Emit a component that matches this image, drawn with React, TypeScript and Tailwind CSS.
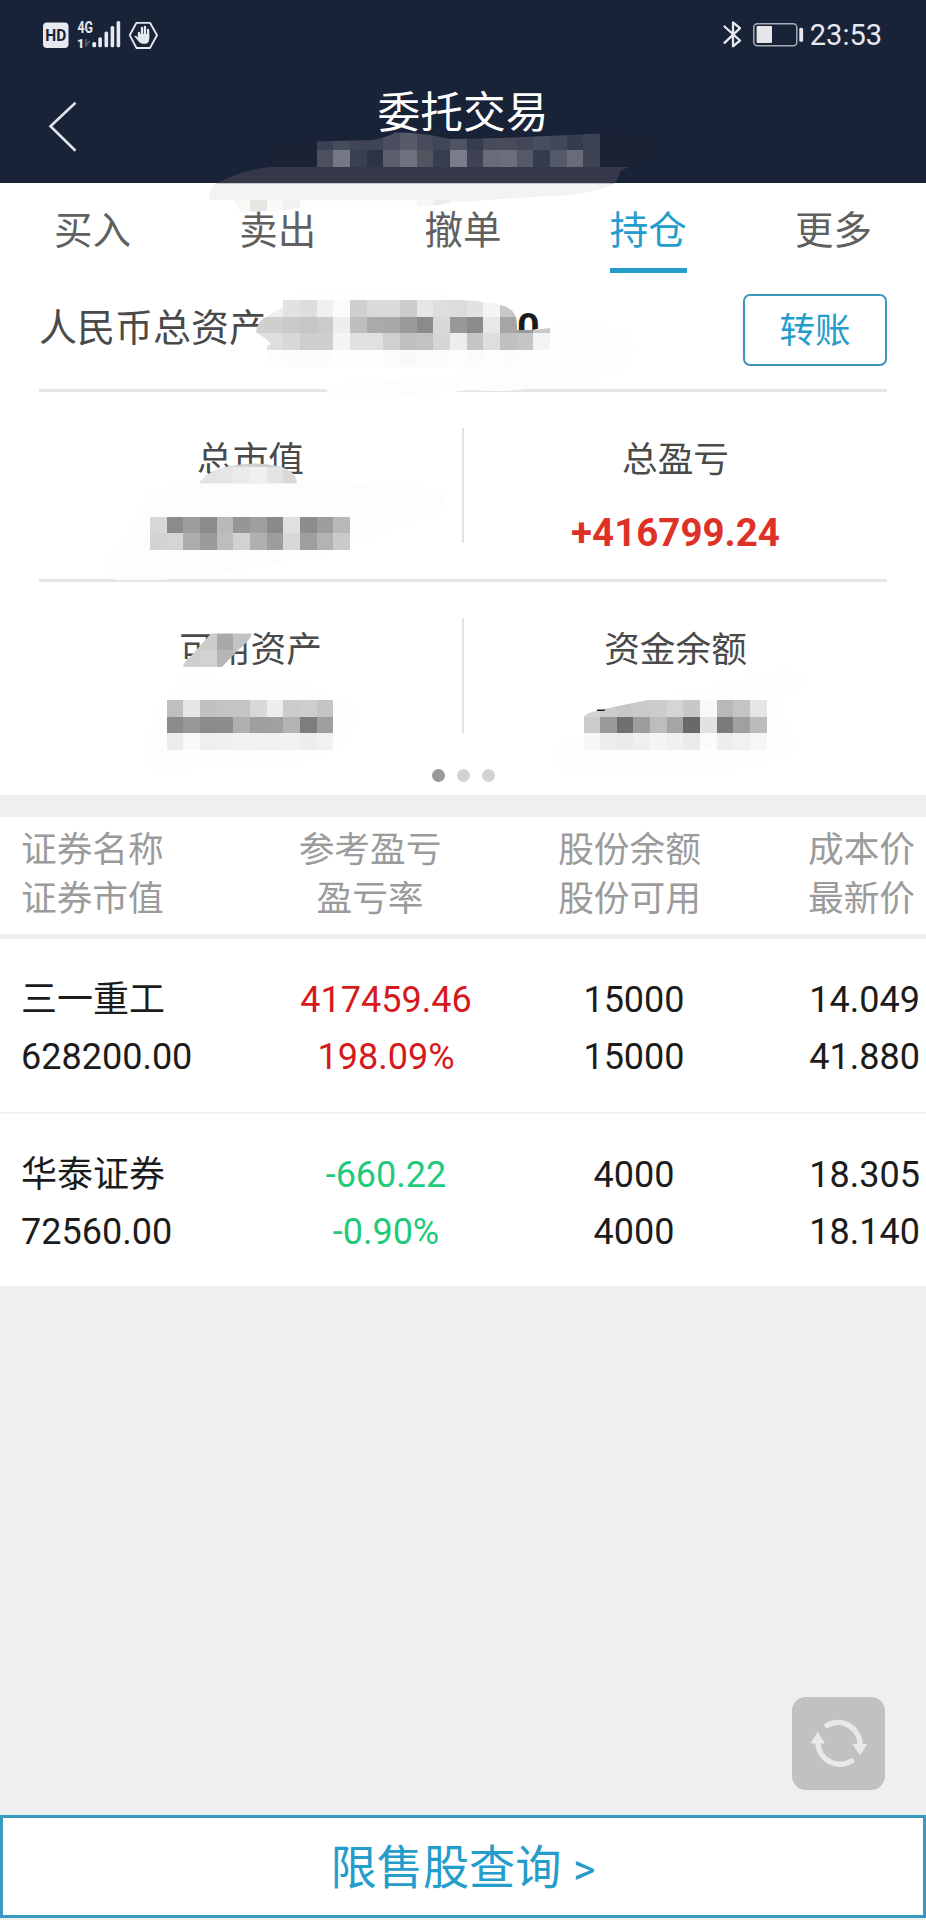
import type { ReactNode } from "react";

const CELL = 50 / 3;

const tabs = ["买入", "卖出", "撤单", "持仓", "更多"];

const columns = [
  { top: "证券名称", bottom: "证券市值", width: "w-[268px] items-start" },
  { top: "参考盈亏", bottom: "盈亏率", width: "w-[162px] items-center" },
  { top: "股份余额", bottom: "股份可用", width: "w-[357px] items-center" },
  { top: "成本价", bottom: "最新价", width: "w-[108px] items-start" },
];

const holdings = [
  {
    name: "三一重工",
    value: "628200.00",
    profit: "417459.46",
    rate: "198.09%",
    total: "15000",
    usable: "15000",
    cost: "14.049",
    price: "41.880",
    color: "text-[#d51a1c]",
  },
  {
    name: "华泰证券",
    value: "72560.00",
    profit: "-660.22",
    rate: "-0.90%",
    total: "4000",
    usable: "4000",
    cost: "18.305",
    price: "18.140",
    color: "text-[#1fca7d]",
  },
];

// One row of mosaic blocks, col and row are counted in CELL units
function Blocks({ col, row, colors }: { col: number; row: number; colors: string }) {
  return (
    <g shapeRendering="crispEdges">
      {colors.split(" ").map((c, i) => (
        <rect
          key={i}
          x={Math.round((col + i) * CELL)}
          y={Math.round(row * CELL)}
          width={Math.round((col + i + 1) * CELL) - Math.round((col + i) * CELL)}
          height={Math.round((row + 1) * CELL) - Math.round(row * CELL)}
          fill={c.length === 2 ? `#${c}${c}${c}` : `#${c}`}
        />
      ))}
    </g>
  );
}

function PrivacyMask() {
  return (
    <svg className="absolute top-0 left-0 pointer-events-none" width="926" height="800" viewBox="0 0 926 800">
      <defs>
        <clipPath id="account">
          <path d="M316 141.5 L372 140 Q386 138 395 132.5 Q422 132 450 139 L500 138 L601 133.5 V167 H316Z" />
        </clipPath>
        <clipPath id="tabSmear">
          <path d="M233 200 H463 L440 205 L417 207 L400 206 L320 204 L285 210 L240 212Z" />
        </clipPath>
        <clipPath id="assets">
          <path d="M283 300 H463 Q490 302 500 305 Q517 308 517 325 V330 L534 330 L551 328 V350 H267 V346 L271 344 L266 339 L256 332 Q257 323 264 318 L283 307Z" />
        </clipPath>
        <clipPath id="marketLabel">
          <path d="M199 483.5 Q207 470 230 466 Q255 461 278 466 Q297 471 297 483.5Z" />
        </clipPath>
        <clipPath id="availLabel">
          <path d="M211 633.5 H252 Q250 641 238 650 L222 667 H183 Q184 661 191 656Z" />
        </clipPath>
        <clipPath id="cash">
          <path d="M584 750 V717 Q586 713 596 711 L618 706 L648 700 H767 V750Z" />
        </clipPath>
      </defs>

      <path d="M268 167 V150 Q270 142 316 141.5 L601 133.5 Q650 133 655 146 Q654 158 629 167Z" fill="#1c2134" />
      <g clipPath="url(#account)">
        <Blocks col={19} row={7} colors="3b4254 474c5d 3f4557 3f4557 4a4e5e 575a69 484c5c 40465a 4f5362 343c4f 484b5a 484b5a 434858 494e5e 434858 343c4f 3c4254" />
        <Blocks col={19} row={8} colors="3b4254 474c5d 3f4557 3f4557 4a4e5e 575a69 484c5c 40465a 4f5362 343c4f 484b5a 484b5a 434858 494e5e 434858 343c4f 3c4254" />
        <Blocks col={19} row={9} colors="4b4f5e 747784 3a4051 2c3347 5b5f6d 6f717e 51555f 373d50 7a7c87 3d4354 696c78 6d6e7a 555865 343c4d 555a68 6a6b78 3d4353" />
      </g>
      <path d="M216 183.5 Q242 170 270 167 H629 L620 171 Q619 179 614 183.5Z" fill="#343849" />
      <path d="M216 183.5 H616 Q600 191 570 195 L500 199 L463 202 L440 200 H209 Q208 192 216 183.5Z" fill="#f3f3f2" />
      <g clipPath="url(#tabSmear)">
        <Blocks col={14} row={12} colors="f8f8f6 e5e5e2 fa f1f1ef fd fe fe fe fe fe fe f8 ed f6" />
      </g>

      <path d="M286 300 L300 290 H450 V367 H267 V346 H286Z M463 350 V345 L551 326 H600 Q634 326 634 350 Q634 372 600 378 H463Z" fill="#fefefd" />
      <path d="M325 385 L470 374 L545 380 Q540 394 470 390 Q400 398 330 400Z" fill="#fdfdfb" />
      <g clipPath="url(#assets)">
        <Blocks col={16} row={18} colors="ef e2 dd f0 fb cf da da cc e6 de dc e2 f4 c8 c8" />
        <Blocks col={15} row={19} colors="d0 cf ca c6 cb ee be aa a9 99 8b d8 98 8b e8 a5 99 c8" />
        <Blocks col={15} row={20} colors="de de d8 ce cf f5 e0 e0 d0 bf c2 d6 ed c5 de c0 c5 f3" />
      </g>
      <Blocks col={16} row={21} colors="fd fc fb fc fe fd fd fb f9 fb fc fd fb fd fc fd" />

      <path d="M150 490 L200 483 H340 L440 488 Q450 500 440 512 L370 538 Q300 566 160 580 H116 Q100 575 105 565 L130 530Z" fill="#fdfdfc" />
      <g clipPath="url(#marketLabel)">
        <Blocks col={11} row={27} colors="cf cf cf cf d0 cf c8 c8" />
        <path d="M198 484 Q210 469 240 467 Q275 465 297 484Z" fill="#e6e6e6" />
        <Blocks col={11} row={28} colors="e3 e3 e6 ea f0 e4 d8 d8" />
      </g>
      <Blocks col={9} row={31} colors="d8 8b 9d 8b b9 96 9f 8a e0 8d 9d b8" />
      <Blocks col={9} row={32} colors="d3 d5 ac 9b bd d2 b0 9d d8 9f b3 ca" />

      <path d="M178 667 H222 L205 682 H300 L355 705 Q366 716 350 736 Q345 755 300 762 L160 772 Q140 770 145 750 L155 705 L178 685Z" fill="#fefefd" />
      <g clipPath="url(#availLabel)">
        <Blocks col={10} row={38} colors="cc cc cc a9 c2 c8" />
        <Blocks col={10} row={39} colors="cf cf d2 b6 bc c0" />
      </g>
      <Blocks col={10} row={42} colors="bf e6 c0 c4 c4 d8 ed cc ce c4" />
      <Blocks col={10} row={43} colors="8b 98 8b 8d b0 9f a0 b4 7d 9f" />
      <Blocks col={10} row={44} colors="ec f9 ef f0 f2 f1 f1 f2 ee f1" />

      <path d="M650 700 L780 670 Q806 668 808 680 Q805 690 775 700 Q785 730 800 740 Q795 765 700 775 L560 772 Q548 760 555 745 L584 735Z" fill="#fefefc" />
      <g clipPath="url(#cash)">
        <Blocks col={35} row={42} colors="d3 cc c6 ca cc d5 c8 f8 b8 c4 e5" />
        <Blocks col={35} row={43} colors="cb 9a 70 9d bd a5 69 e2 7b a0 bc" />
        <Blocks col={35} row={44} colors="f7 ee ea ef f5 f0 ea fb ee f1 f6" />
      </g>
      <path d="M597 709.5 H606 L604 711 H597Z" fill="#222" />
    </svg>
  );
}

function StatusBar() {
  return (
    <div className="flex h-[70px] items-start justify-between pt-[18px] pr-[44px] pl-[40px]">
      <svg width="122" height="34" viewBox="40 18 122 34" fill="#e6e9f0">
        <rect x="43" y="22.5" width="25.5" height="25.5" rx="4" />
        <text x="55.8" y="40.8" textAnchor="middle" textLength="21" lengthAdjust="spacingAndGlyphs" fontFamily="Roboto" fontWeight="700" fontSize="16" fill="#192338">HD</text>
        <text x="77.5" y="32.8" textLength="15.5" lengthAdjust="spacingAndGlyphs" fontFamily="Roboto" fontWeight="700" fontSize="16.5">4G</text>
        <text x="77" y="47.5" fontFamily="Roboto" fontWeight="900" fontSize="12.5">1</text>
        <path d="M86 39v8M86 45l4-4" stroke="#586074" strokeWidth="1.6" fill="none" />
        <rect x="92.3" y="42" width="3.8" height="5.3" rx="1.5" />
        <rect x="98.3" y="37.3" width="3.6" height="10" rx="1.5" />
        <rect x="104.5" y="31.5" width="3.6" height="15.8" rx="1.5" />
        <rect x="110.6" y="26" width="3.6" height="21.3" rx="1.5" />
        <rect x="116.6" y="21" width="3.6" height="26.3" rx="1.5" />
        <path d="M136.5 22.8H150L157 35.2L150 48H136.5L129.7 35.2Z" fill="none" stroke="#e6e9f0" strokeWidth="1.8" strokeLinejoin="round" />
        <path d="M139 33 V39 M142 28 V37 M145 27 V37 M148.1 30 V38" stroke="#e6e9f0" strokeWidth="2.3" strokeLinecap="round" />
        <path d="M138 34 H149.2 V39 Q149 43.5 145 43.8 Q140 44 138.3 41 L134.3 36.3 Q135.5 35 138 37.5Z" />
      </svg>
      <div className="flex h-[34px] items-center">
        <svg width="86" height="34" viewBox="720 18 86 34" fill="none" stroke="#e6e9f0">
          <path d="M724.5 26.5 L740 40.5 L733 46.3 V22.5 L740 28.2 L724.5 42.8" strokeWidth="2.3" strokeLinejoin="round" strokeLinecap="round" />
          <rect x="753.8" y="23.7" width="43" height="22" rx="3.5" strokeWidth="1.5" stroke="#a4acb6" />
          <rect x="756.6" y="26" width="15.4" height="17" rx="1" fill="#e6e7e9" stroke="none" />
          <rect x="799.3" y="27.8" width="3.8" height="14" rx="1.5" fill="#e6e9f0" stroke="none" />
        </svg>
        <span className="ml-[4px] text-[29px] leading-[34px] text-[#e6e9f0]">23:53</span>
      </div>
    </div>
  );
}

function Stat({ label, children }: { label: string; children?: ReactNode }) {
  return (
    <div className="flex flex-1 flex-col items-center">
      <span className="text-[35.7px] leading-[50px] text-[#4a4a4a]">{label}</span>
      <span className="mt-[23px] h-[50px] text-[38.5px] leading-[50px] font-bold text-[#df3226]">{children}</span>
    </div>
  );
}

export default function App() {
  return (
    <div
      lang="zh-CN"
      className="relative flex h-[1920px] w-[926px] flex-col overflow-hidden bg-[#efefef] font-['Roboto','Noto_Sans_CJK_SC',sans-serif]"
    >
      <header className="h-[183px] bg-[#192338]">
        <StatusBar />
        <div className="grid grid-cols-3">
          <svg className="mt-[30px] ml-[46px]" width="34" height="54" viewBox="46 100 34 54">
            <path d="M75.5 102.7 L50.5 126.2 L75.5 150.8" fill="none" stroke="#dfe3ea" strokeWidth="2.6" />
          </svg>
          <h1 className="mt-[13px] text-center text-[42.7px] leading-[60px] text-white">委托交易</h1>
        </div>
      </header>

      <nav className="grid h-[92px] grid-cols-5 bg-white">
        {tabs.map((tab) => (
          <div key={tab} className="flex justify-center pt-[18px]">
            <span
              className={
                tab === "持仓"
                  ? "h-[72px] border-b-[5px] border-[#259dcb] text-[38.5px] leading-[60px] text-[#259dcb]"
                  : "text-[38.5px] leading-[60px] text-[#606060]"
              }
            >
              {tab}
            </span>
          </div>
        ))}
      </nav>

      <section className="h-[520px] bg-white px-[39px]">
        <div className="flex h-[117px] justify-between border-b-3 border-[#e5e5e5] pt-[19px]">
          <div className="flex h-[68px] items-center text-[38px] text-[#4a4a4a]">
            <span>人民币总资产</span>
            <b className="ml-[250px] text-[39.5px] text-[#1b1b1b]">0</b>
          </div>
          <button className="h-[72px] w-[144px] rounded-[7px] border-[2.5px] border-[#3d97bb] pt-[4px] text-[35.5px] text-[#259dcb]">转账</button>
        </div>
        <div className="flex h-[190px] items-start border-b-3 border-[#e5e5e5] pt-[43px]">
          <Stat label="总市值" />
          <div className="-mt-[7px] h-[115px] w-[2px] bg-[#e2e2e2]" />
          <Stat label="总盈亏">+416799.24</Stat>
        </div>
        <div className="flex h-[187px] items-start pt-[43px]">
          <Stat label="可用资产" />
          <div className="-mt-[7px] h-[115px] w-[2px] bg-[#e2e2e2]" />
          <Stat label="资金余额" />
        </div>
        <div className="flex justify-center gap-[12px]">
          <i className="size-[13px] rounded-full bg-[#999]" />
          <i className="size-[13px] rounded-full bg-[#d3d3d3]" />
          <i className="size-[13px] rounded-full bg-[#d3d3d3]" />
        </div>
      </section>

      <section className="mt-[22px] bg-white">
        <div className="flex h-[122px] border-b-5 border-[#efefef] pt-[9px] pl-[21px] text-[35.7px] leading-[49px] text-[#9b9b9b]">
          {columns.map(({ top, bottom, width }) => (
            <div key={top} className={`flex shrink-0 flex-col whitespace-nowrap ${width}`}>
              <span>{top}</span>
              <span>{bottom}</span>
            </div>
          ))}
        </div>
        {holdings.map((item) => (
          <div
            key={item.name}
            className="flex h-[175px] border-b-2 border-[#f2f2f2] pt-[33px] pl-[21px] text-[36px] leading-[56.5px] text-[#1c1c1c] last:h-[172px] last:border-0"
          >
            <div className="flex w-[255px] flex-col">
              <span>{item.name}</span>
              <span>{item.value}</span>
            </div>
            <div className={`flex w-[220px] flex-col items-center ${item.color}`}>
              <span>{item.profit}</span>
              <span>{item.rate}</span>
            </div>
            <div className="flex w-[276px] flex-col items-center">
              <span>{item.total}</span>
              <span>{item.usable}</span>
            </div>
            <div className="flex w-[148px] flex-col items-end">
              <span>{item.cost}</span>
              <span>{item.price}</span>
            </div>
          </div>
        ))}
      </section>

      <button className="mt-auto mr-[41px] mb-[25px] size-[93px] self-end rounded-[14px] bg-[#c1c1c1]">
        <svg width="93" height="93" viewBox="792 1697 93 93">
          <path d="M827 1725.5 A22 22 0 0 1 860 1745 M851.5 1761 A22 22 0 0 1 818 1742" fill="none" stroke="#e8e8e8" strokeWidth="5.4" strokeLinecap="round" />
          <path d="M852.3 1744H867.3L860 1755.5Z M810.3 1743.6H825L817.7 1731.7Z" fill="#e8e8e8" />
        </svg>
      </button>

      <footer className="mb-[2px] h-[103px] shrink-0 border-3 border-[#379bbf] bg-white text-center text-[46.2px] leading-[101px] text-[#259dcb]">
        限售股查询 <span className="text-[43px]">&gt;</span>
      </footer>

      <PrivacyMask />
    </div>
  );
}
